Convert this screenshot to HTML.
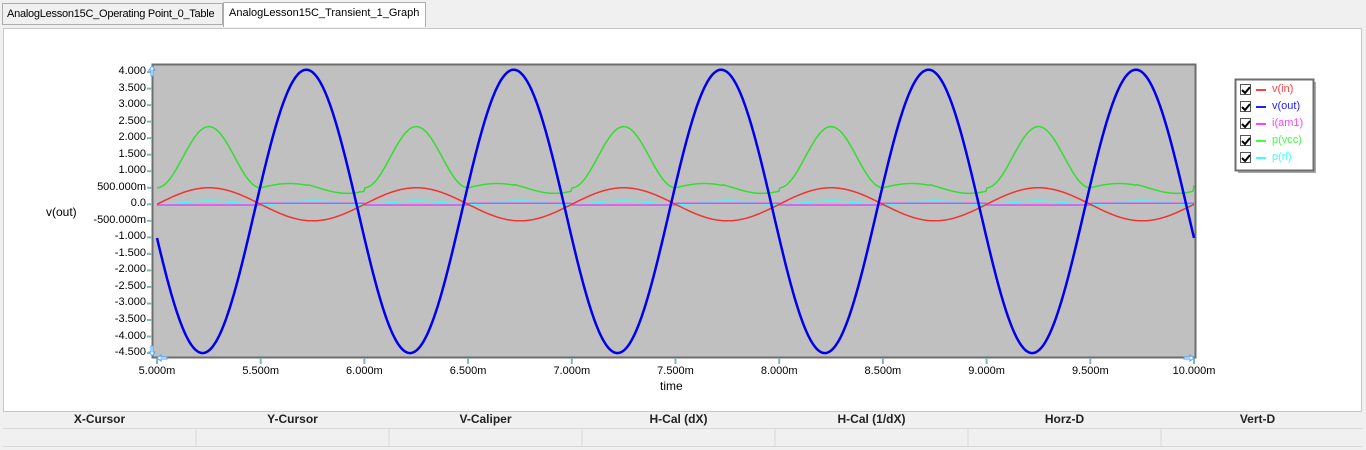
<!DOCTYPE html>
<html><head><meta charset="utf-8"><style>
body{margin:0;width:1366px;height:450px;background:#f0f0f0;font-family:"Liberation Sans",sans-serif;position:relative;overflow:hidden}
.tab{position:absolute;font-size:11px;color:#000;border:1px solid #adadad;box-sizing:border-box;padding:4px 0 0 5px;white-space:nowrap;overflow:hidden}
.ax{position:absolute;font-size:11px;color:#000;white-space:nowrap}
.hdr{position:absolute;top:412px;height:16px;width:193px;text-align:center;font-size:12px;font-weight:bold;color:#222}
</style></head><body>
<div class="tab" style="left:2px;top:3px;width:221px;height:22px;background:#f0f0f0;letter-spacing:-0.25px;padding-left:4px">AnalogLesson15C_Operating Point_0_Table</div>
<div class="tab" style="left:223px;top:2px;width:203px;height:25px;background:#fff;border-bottom:none">AnalogLesson15C_Transient_1_Graph</div>
<div style="position:absolute;left:3px;top:28px;width:1359px;height:384px;background:#fff;border:1px solid #c8c8c8;box-sizing:border-box"></div>
<svg style="position:absolute;left:0;top:0" width="1366" height="450" id="s">
<rect x="152.5" y="64.5" width="1043" height="293" fill="#c0c0c0" stroke="#6e6e6e" stroke-width="2"/>
<g id="g"></g>
</svg>
<div class="ax" style="left:46px;top:205px;font-size:12px">v(out)</div>
<div class="ax" style="left:660px;top:379px;font-size:12px">time</div>
<div id="lab"></div>
<div class="hdr" style="left:3px">X-Cursor</div><div class="hdr" style="left:196px">Y-Cursor</div><div class="hdr" style="left:389px">V-Caliper</div><div class="hdr" style="left:582px">H-Cal (dX)</div><div class="hdr" style="left:775px">H-Cal (1/dX)</div><div class="hdr" style="left:968px">Horz-D</div><div class="hdr" style="left:1161px">Vert-D</div>
<div style="position:absolute;left:3px;top:428px;width:1359px;height:1px;background:#d8d8d8"></div>
<div style="position:absolute;left:3px;top:446px;width:1359px;height:1px;background:#d8d8d8"></div>
<script>
var g=document.getElementById('g'),lab=document.getElementById('lab'),h='',L='';
function X(t){return 157+(t-5)*207.4}function Y(v){return 204.3-v*33.06}
for(var i=0;i<18;i++){var v=4-i*0.5;var y=Y(v);
h+='<line x1="147" x2="152" y1="'+y+'" y2="'+y+'" stroke="#7fb8b8" stroke-width="2"/>';
var s=Math.abs(v)<1&&v!=0?(v<0?'-':'')+'500.000m':(v==0?'0.0':v.toFixed(3));
L+='<div class="ax" style="right:'+(1366-146)+'px;top:'+(y-7)+'px">'+s+'</div>';}
for(var i=0;i<11;i++){var t=5+i*0.5,x=X(t);
h+='<line x1="'+x+'" x2="'+x+'" y1="358" y2="364" stroke="#7fb8b8" stroke-width="2"/>';
L+='<div class="ax" style="left:'+(x-26)+'px;top:365px;width:52px;text-align:center">'+t.toFixed(3)+'m</div>';}
function P(f,c,w){var d='';for(var x=157;x<=1194;x+=1){var t=5+(x-157)/207.4;d+=(x==157?'M':'L')+x+' '+Y(f(t)).toFixed(1);}h+='<path d="'+d+'" fill="none" stroke="'+c+'" stroke-width="'+w+'"/>';}
function S(t){return Math.sin(2*Math.PI*(t-5))}
P(function(t){var u=((t-5)%1+1)%1;var s=S(t);if(s>=0)return 0.5+1.85*s*s;var q=(u-0.5)*2;return 0.5+0.13*Math.sin(2*Math.PI*q*0.9)*(q<0.45?1:1.3);},'#33dd33',1.5);
P(function(t){var s=S(t);return 0.1*s*s;},'#33ffff',1.5);
P(function(t){return S(t)<0?0.03:-0.02;},'#ee44ee',1.5);
P(function(t){return 0.5*S(t)},'#ee3333',1.5);
P(function(t){return -0.215+4.285*Math.cos(2*Math.PI*(t-5.72))},'#0000ee',2.5);
h+='<rect x="1238" y="82" width="78" height="91" fill="#aaa"/><rect x="1235.5" y="79.5" width="78" height="91" fill="#fff" stroke="#6e6e6e" stroke-width="2"/>';
var names=['v(in)','v(out)','i(am1)','p(vcc)','p(rl)'],cols=['#ff4040','#2020ff','#ff40ff','#40ff40','#40ffff'];
for(var i=0;i<5;i++){var y=90+i*17;
h+='<rect x="1240.5" y="'+(y-5.5)+'" width="10" height="10" fill="#fff" stroke="#555"/><path d="M1242 '+(y)+'l3 3 5-6" fill="none" stroke="#000" stroke-width="2"/>';
h+='<line x1="1256" x2="1266" y1="'+y+'" y2="'+y+'" stroke="'+cols[i]+'" stroke-width="2"/>';
L+='<div class="ax" style="left:1272px;top:'+(y-7)+'px;color:'+cols[i]+'">'+names[i]+'</div>';}
for(var i=1;i<7;i++){h+='<line x1="'+(3+i*193)+'" x2="'+(3+i*193)+'" y1="429" y2="446" stroke="#d8d8d8"/>';}
h+='<path d="M152 66l-3 4h2v6h2v-6h2z M152 356l-3-4h2v-6h2v6h2z M157 358l4-3v2h6v2h-6v2z M1194 358l-4-3v2h-6v2h6v2z" fill="#fff" stroke="#4aa0ff"/>';
g.innerHTML=h;lab.innerHTML=L;
</script>
</body></html>
